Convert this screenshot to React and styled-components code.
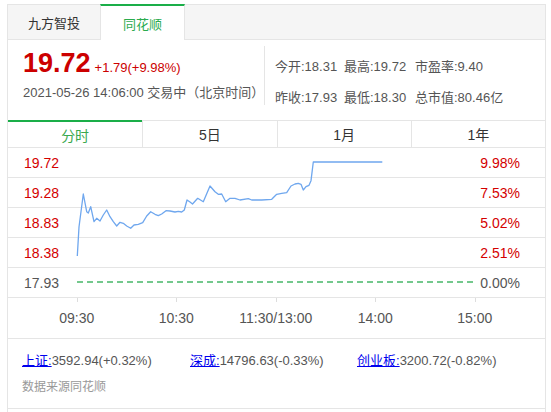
import styled, { createGlobalStyle } from "styled-components";

const GlobalStyle = createGlobalStyle`
  body {
    margin: 0;
    background: #ffffff;
    font-family: "Liberation Sans", "Noto Sans CJK SC", sans-serif;
    color: #555555;
  }
`;

const Card = styled.div`
  box-sizing: border-box;
  width: 539px;
  margin: 4px 0 0 7px;
  border-left: 1px solid #e5e5e5;
  border-right: 1px solid #e5e5e5;
  padding-bottom: 12px;
`;

const TabBar = styled.div`
  display: flex;
  box-sizing: border-box;
  height: 36px;
  background: #f5f5f5;
  border-top: 1px solid #e5e5e5;
  border-bottom: 1px solid #e5e5e5;
`;

const SiteTab = styled.div`
  box-sizing: border-box;
  display: flex;
  align-items: center;
  justify-content: center;
  font-size: 13px;
  width: ${(p) => (p.$active ? "85px" : "92px")};
  height: ${(p) => (p.$active ? "36px" : "34px")};
  margin-top: ${(p) => (p.$active ? "-1px" : "0")};
  color: ${(p) => (p.$active ? "#2bab4e" : "#333333")};
  background: ${(p) => (p.$active ? "#ffffff" : "transparent")};
  border-top: ${(p) => (p.$active ? "2px solid #1aae48" : "none")};
  border-left: ${(p) => (p.$active ? "1px solid #e5e5e5" : "none")};
  border-right: ${(p) => (p.$active ? "1px solid #e5e5e5" : "none")};
`;

const Header = styled.div`
  display: flex;
  height: 80px;
  box-sizing: border-box;
  padding: 6px 0 0 15px;
`;

const Quote = styled.div`
  box-sizing: border-box;
  width: 242px;
  height: 59px;
  border-right: 1px solid #e5e5e5;
`;

const PriceRow = styled.div`
  display: flex;
  align-items: baseline;
  gap: 4px;
  height: 36px;
  color: #cc0000;
`;

const BigPrice = styled.span`
  font-size: 27px;
  font-weight: bold;
  line-height: 34px;
`;

const Change = styled.span`
  font-size: 13px;
`;

const DateLine = styled.div`
  font-size: 13px;
  line-height: 18px;
  margin-top: 2px;
`;

const Stats = styled.div`
  display: grid;
  grid-template-columns: 69px 71px auto;
  grid-auto-rows: 31px;
  align-items: center;
  padding: 4px 0 0 10px;
  font-size: 13px;
  white-space: nowrap;
`;

const ChartTabs = styled.div`
  display: grid;
  grid-template-columns: repeat(4, 1fr);
  box-sizing: border-box;
  height: 28px;
  border-top: 1px solid #e5e5e5;
  border-bottom: 1px solid #e5e5e5;
`;

const ChartTab = styled.div`
  box-sizing: border-box;
  display: flex;
  align-items: center;
  justify-content: center;
  font-size: 14px;
  color: ${(p) => (p.$active ? "#3aa84e" : "#333333")};
  border-left: ${(p) => (p.$first ? "none" : "1px solid #e5e5e5")};
  margin-top: ${(p) => (p.$active ? "-1px" : "0")};
  border-top: ${(p) => (p.$active ? "2px solid #1aae48" : "none")};
`;

const Plot = styled.div`
  position: relative;
`;

const Row = styled.div`
  display: flex;
  justify-content: space-between;
  align-items: center;
  box-sizing: border-box;
  height: 30px;
  border-bottom: 1px solid #e5e5e5;
  padding-right: 25px;
  font-size: 14px;
  color: ${(p) => (p.$base ? "#555555" : "#d40000")};
`;

const LeftLabel = styled.span`
  width: 51px;
  text-align: right;
`;

const Line = styled.svg`
  position: absolute;
  left: 0;
  top: 0;
  pointer-events: none;
`;

const Axis = styled.div`
  display: flex;
  box-sizing: border-box;
  height: 41px;
  padding-left: 19px;
  border-bottom: 1px solid #e5e5e5;
`;

const Tick = styled.div`
  position: relative;
  width: 99.5px;
  display: flex;
  align-items: center;
  justify-content: center;
  font-size: 14px;
  color: #555555;
  &::before {
    content: "";
    position: absolute;
    top: 0;
    left: 50%;
    width: 1px;
    height: 4px;
    background: #dddddd;
  }
`;

const Footer = styled.div`
  box-sizing: border-box;
  height: 70px;
  padding: 13px 0 0 14px;
  border-bottom: 1px solid #e5e5e5;
`;

const Indices = styled.div`
  display: grid;
  grid-template-columns: 168px 167px auto;
  font-size: 13px;
  line-height: 18px;
  white-space: nowrap;
`;

const IndexLink = styled.a`
  color: #0000ee;
  text-decoration: underline;
`;

const Source = styled.div`
  margin-top: 7px;
  font-size: 12px;
  color: #999999;
`;

const rows = [
  ["19.72", "9.98%"],
  ["19.28", "7.53%"],
  ["18.83", "5.02%"],
  ["18.38", "2.51%"],
  ["17.93", "0.00%", true],
];

const times = ["09:30", "10:30", "11:30/13:00", "14:00", "15:00"];

// page coords of the minute line, shifted into the plot box below
const pts = [
  [77.3, 256], [79, 227], [83.3, 194], [86.7, 211.7], [88.3, 213], [90.7, 206.7],
  [94, 221.7], [96.7, 218.3], [100, 221], [103.3, 215], [106.7, 210], [110, 216.7],
  [113.3, 221.7], [116.7, 226], [120, 222.3], [123.3, 223.3], [126.7, 226],
  [130.7, 228.3], [134, 225], [138.3, 224.3], [142.7, 222.7], [146.7, 216],
  [150.7, 211.7], [155, 214.3], [158.3, 215.7], [161.7, 214], [166, 210.7],
  [170, 211], [175, 212], [178.3, 211.3], [181.7, 212], [184.3, 210], [187, 200],
  [190, 202], [192.5, 204], [197.7, 198.3], [203.3, 201.7], [210, 186], [215, 191.7],
  [218.3, 194.3], [221.7, 194], [225.7, 201.7], [230, 198.3], [235, 198.3],
  [240, 200], [248.3, 198.7], [251.7, 200], [261.7, 200], [271.7, 199.3],
  [276.7, 194.3], [281.7, 193.3], [286.7, 192.7], [291, 186], [295, 184],
  [298.3, 183.3], [301, 184.3], [303.3, 190], [306, 186.7], [309, 185.3],
  [311, 180.7], [313.3, 162], [382.3, 162],
];

const linePoints = pts.map(([x, y]) => `${x - 8},${y - 148}`).join(" ");

export default function App() {
  return (
    <>
      <GlobalStyle />
      <Card>
        <TabBar>
          <SiteTab>九方智投</SiteTab>
          <SiteTab $active>同花顺</SiteTab>
        </TabBar>

        <Header>
          <Quote>
            <PriceRow>
              <BigPrice>19.72</BigPrice>
              <Change>+1.79(+9.98%)</Change>
            </PriceRow>
            <DateLine>2021-05-26 14:06:00 交易中（北京时间）</DateLine>
          </Quote>
          <Stats>
            <span>今开:18.31</span>
            <span>最高:19.72</span>
            <span>市盈率:9.40</span>
            <span>昨收:17.93</span>
            <span>最低:18.30</span>
            <span>总市值:80.46亿</span>
          </Stats>
        </Header>

        <ChartTabs>
          <ChartTab $first $active>分时</ChartTab>
          <ChartTab>5日</ChartTab>
          <ChartTab>1月</ChartTab>
          <ChartTab>1年</ChartTab>
        </ChartTabs>

        <Plot>
          {rows.map(([price, pct, base]) => (
            <Row key={price} $base={base}>
              <LeftLabel>{price}</LeftLabel>
              <span>{pct}</span>
            </Row>
          ))}
          <Line width="537" height="150" viewBox="0 0 537 150">
            <line
              x1="69"
              y1="134"
              x2="467"
              y2="134"
              stroke="#74c88d"
              strokeWidth="2"
              strokeDasharray="6 4"
            />
            <polyline
              points={linePoints}
              fill="none"
              stroke="#6fa7ee"
              strokeWidth="1.3"
              strokeLinejoin="round"
            />
          </Line>
        </Plot>

        <Axis>
          {times.map((t) => (
            <Tick key={t}>{t}</Tick>
          ))}
        </Axis>

        <Footer>
          <Indices>
            <span>
              <IndexLink href="#">上证:</IndexLink>3592.94(+0.32%)
            </span>
            <span>
              <IndexLink href="#">深成:</IndexLink>14796.63(-0.33%)
            </span>
            <span>
              <IndexLink href="#">创业板:</IndexLink>3200.72(-0.82%)
            </span>
          </Indices>
          <Source>数据来源同花顺</Source>
        </Footer>
      </Card>
    </>
  );
}
